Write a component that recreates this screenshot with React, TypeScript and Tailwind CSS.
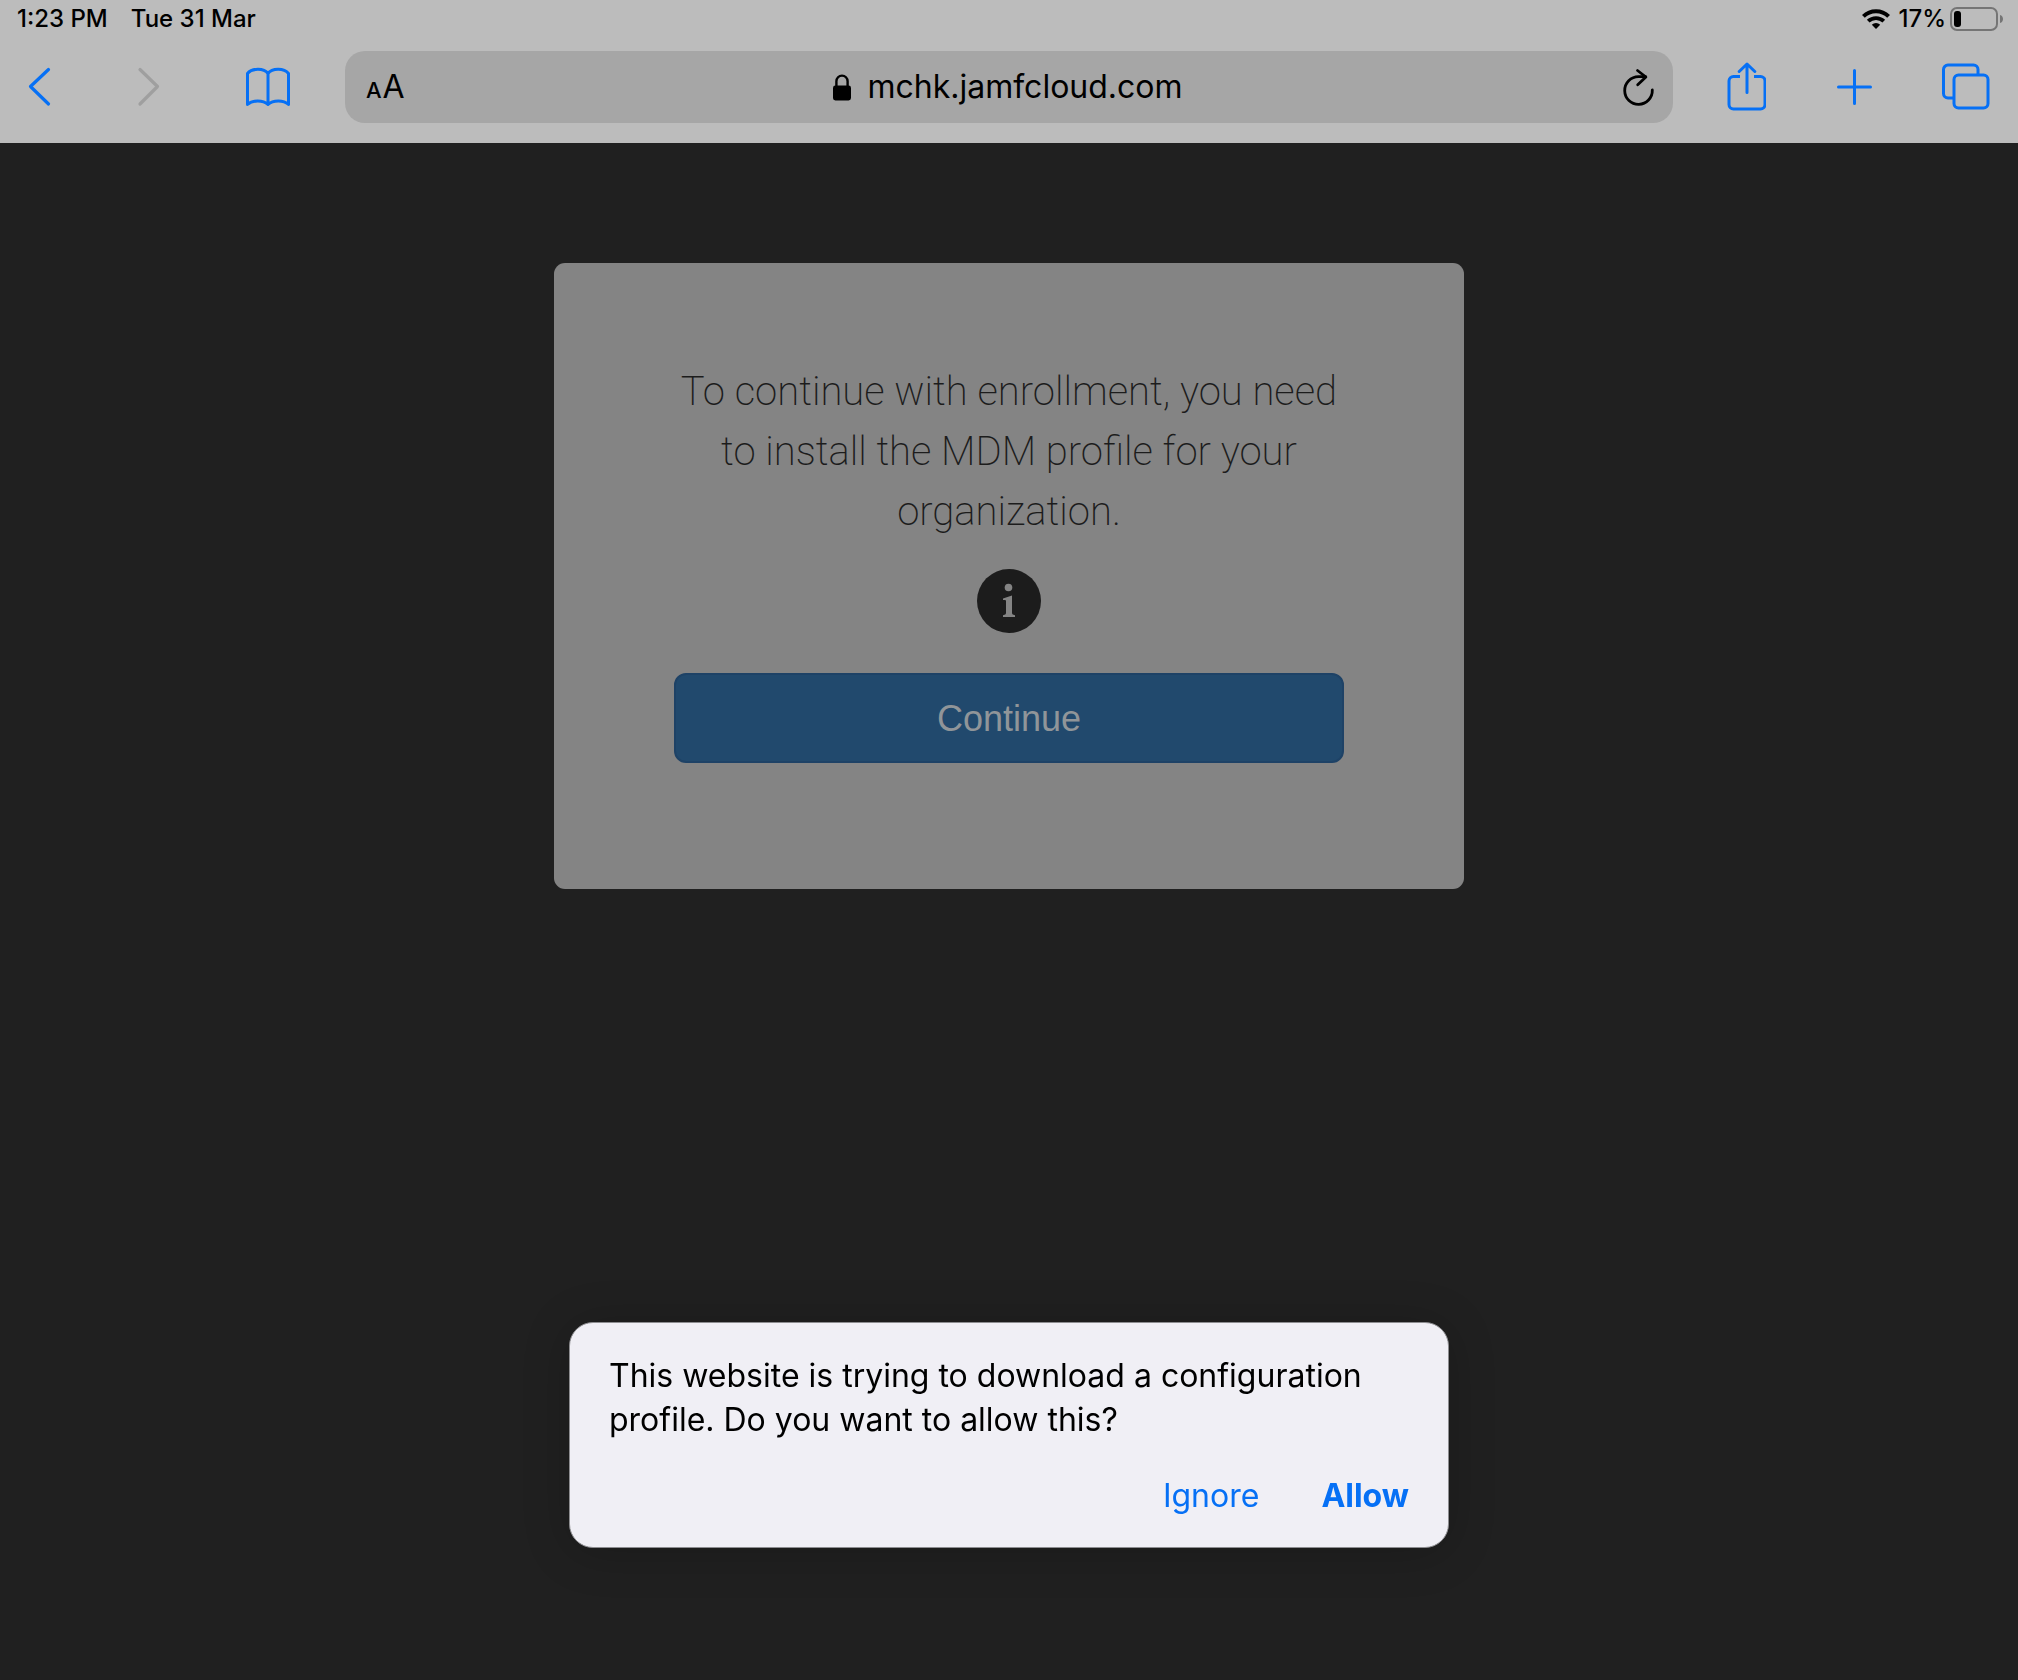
import React from "react";

const stroke = {
  fill: "none",
  stroke: "currentColor",
  strokeLinecap: "round" as const,
  strokeLinejoin: "round" as const,
};

function StatusBar() {
  return (
    <div className="flex h-[38px] items-center justify-between pr-[14px] pl-[17px] text-[24px] leading-none font-medium">
      <div className="flex gap-[23px]">
        <span>1:23 PM</span>
        <span>Tue 31 Mar</span>
      </div>
      <div className="flex items-center gap-2">
        <svg width="28" height="20" viewBox="0 0 28 20" fill="none" stroke="currentColor" aria-hidden="true">
          <path d="M1.4 7.4a18 18 0 0 1 25.2 0" strokeWidth="4" />
          <path d="M6.2 12.2a11.2 11.2 0 0 1 15.6 0" strokeWidth="3.8" />
          <path d="M14 20l-4.2-4.2a6 6 0 0 1 8.4 0z" fill="currentColor" stroke="none" />
        </svg>
        <div className="flex items-center gap-1">
          <span>17%</span>
          <svg width="54" height="24" viewBox="0 0 54 24" fill="none" aria-hidden="true">
            <rect x="1" y="1" width="46" height="22" rx="6" stroke="#757575" strokeWidth="2" />
            <rect x="4" y="4" width="7" height="16" rx="3" fill="#000" />
            <path d="M50 8c4 1 4 7 0 8z" fill="#757575" />
          </svg>
        </div>
      </div>
    </div>
  );
}

function AddressBar() {
  return (
    <div className="grid h-[72px] flex-1 grid-cols-[1fr_auto_1fr] items-center rounded-[20px] bg-[#a6a6a6] pr-[19px] pl-[21px]">
      <button type="button" aria-label="Text size" className="flex items-baseline gap-px justify-self-start leading-none">
        <span className="text-[22px] font-medium">A</span>
        <span className="text-[32px]">A</span>
      </button>
      <div className="flex items-center gap-4">
        <svg width="18" height="27" viewBox="0 0 18 27" aria-hidden="true">
          <path d="M3.4 13V7.2a5.6 5.6 0 0 1 11.2 0V13" fill="none" stroke="#000" strokeWidth="2.4" />
          <rect y="11.5" width="18" height="15" rx="2.4" />
        </svg>
        <input
          aria-label="Address"
          defaultValue="mchk.jamfcloud.com"
          className="field-sizing-content bg-transparent pr-1 text-[32px] leading-10 outline-none"
        />
      </div>
      <button type="button" aria-label="Reload" className="justify-self-end">
        <svg width="31" height="40" viewBox="1 0 31 40" strokeWidth="2.8" {...stroke}>
          <path d="M30.3 23A13.8 13.8 0 1 1 16.5 9.7h7" />
          <path d="M15.5 3.5l8.4 6.5-8.2 7.8" />
        </svg>
      </button>
    </div>
  );
}

function Toolbar() {
  return (
    <nav className="mt-[13px] flex items-center gap-[53px] px-7 pb-5 text-[#0670f5]">
      <div className="flex items-center gap-[84px]">
        <button type="button" aria-label="Back">
          <svg width="24" height="40" viewBox="0 0 24 40" strokeWidth="3.2" {...stroke}>
            <path d="M20.5 2.5l-18 17 18 17.5" />
          </svg>
        </button>
        <button type="button" aria-label="Forward" disabled className="text-[#9f9f9f]">
          <svg width="24" height="40" viewBox="0 0 24 40" strokeWidth="3.2" {...stroke}>
            <path d="M4 2.5l17.5 17L4 37" />
          </svg>
        </button>
        <button type="button" aria-label="Bookmarks">
          <svg width="48" height="40" viewBox="0 0 48 40" strokeWidth="3" {...stroke}>
            <path d="M24 6.5C20 1 8 .8 3.5 6.5v31c5-4.6 15.5-4.6 20.500 0 5-4.6 15.5-4.6 20.500 0v-31C40 .8 28 1 24 6.5zv31" />
          </svg>
        </button>
      </div>
      <div className="flex flex-1 text-black">
        <AddressBar />
      </div>
      <div className="flex items-center gap-[70px]">
        <button type="button" aria-label="Share">
          <svg width="40" height="50" viewBox="0 0 40 50" strokeWidth="3" {...stroke}>
            <path d="M14 14.500H7.500a4.500 4.500 0 0 0-4.500 4.500v23.500a4.500 4.500 0 0 0 4.500 4.500h27a4.500 4.500 0 0 0 4.500-4.500V19a4.500 4.500 0 0 0-4.500-4.500H28" strokeLinecap="butt" />
            <path d="M21 30.5V2.5M13.2 9.5L21 2l7.8 7.5" />
          </svg>
        </button>
        <button type="button" aria-label="New tab">
          <svg width="36" height="36" viewBox="0 0 36 36" strokeWidth="3" {...stroke}>
            <path d="M18.5 1.5v33M2.5 18h32" />
          </svg>
        </button>
        <button type="button" aria-label="Tabs">
          <svg width="48" height="48" viewBox="0 0 48 48" strokeWidth="3" {...stroke}>
            <path d="M11 35H6A4.5 4.5 0 0 1 1.5 30.5V6.5A4.5 4.5 0 0 1 6 2h25.5A4.5 4.5 0 0 1 36 6.500v5" strokeLinecap="butt" />
            <rect x="12" y="12" width="34" height="33" rx="4.5" />
          </svg>
        </button>
      </div>
    </nav>
  );
}

function EnrollmentCard() {
  return (
    <section className="w-full max-w-[910px] rounded-[11px] bg-[#848484] px-[120px] pt-[99px] pb-[126px] text-center text-[#1c1c1c]">
      <p className="font-['Roboto',sans-serif] text-[40px] leading-[60px] font-extralight">
        To continue with enrollment, you need
        <br />
        to install the MDM profile for your
        <br />
        organization.
      </p>
      <svg className="mx-auto mt-[27px]" width="64" height="64" viewBox="0 0 64 64" role="img" aria-label="Information">
        <circle cx="32" cy="32" r="32" fill="#1c1c1c" />
        <circle cx="31.5" cy="18.5" r="3.8" fill="#848484" />
        <path d="M26 29.5l9-3V44q0 1.500 1.500 1.800l1.500.4V48H26v-1.800l1.500-.4q1.500-.3 1.500-1.800V32.200q0-1-1-1.100l-2-.1z" fill="#848484" />
      </svg>
      <button
        type="button"
        className="mt-10 h-[90px] w-full rounded-[12px] border-2 border-[#1e4266] bg-[#21496d] pt-[2px] font-['Liberation_Sans',sans-serif] text-[36px] text-[#909599]"
      >
        Continue
      </button>
    </section>
  );
}

function DownloadPrompt() {
  return (
    <div
      role="dialog"
      aria-labelledby="prompt-text"
      className="fixed bottom-[132px] left-1/2 w-[880px] max-w-full -translate-x-1/2 rounded-[24px] border border-[#8d8d90] bg-[#f0eff5] px-[39px] pt-[31px] pb-[28px] text-black shadow-[0_4px_48px_rgba(0,0,0,0.2)]"
    >
      <p id="prompt-text" className="text-[32px] leading-[44px]">
        This website is trying to download a configuration
        <br />
        profile. Do you want to allow this?
      </p>
      <div className="mt-[31px] flex justify-end gap-[62px] text-[32px] leading-[46px] text-[#0670f5]">
        <button type="button">Ignore</button>
        <button type="button" className="font-bold">Allow</button>
      </div>
    </div>
  );
}

export default function App() {
  return (
    <div className="flex min-h-screen flex-col bg-[#202020] font-['Inter',sans-serif]">
      <header className="bg-[#bcbcbc] text-black">
        <StatusBar />
        <Toolbar />
      </header>
      <main className="flex flex-1 flex-col items-center pt-[120px]">
        <EnrollmentCard />
      </main>
      <DownloadPrompt />
    </div>
  );
}
